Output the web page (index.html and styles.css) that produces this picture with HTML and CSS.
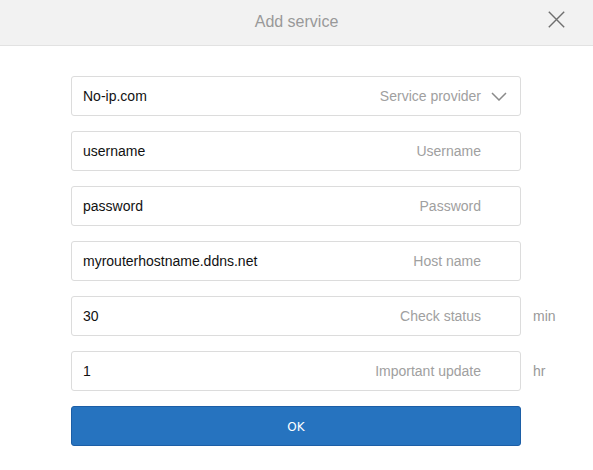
FILE: index.html
```html
<!DOCTYPE html>
<html>
<head>
<meta charset="utf-8">
<link rel="stylesheet" href="styles.css">
</head>
<body>
<div class="dialog">
  <header class="header">
    <div class="title">Add service</div>
    <button class="close" aria-label="Close">
      <svg width="17" height="17" viewBox="0 0 17 17"><path d="M0.8 0.8L16.2 16.2M16.2 0.8L0.8 16.2" stroke="#6f6f6f" stroke-width="1.4" fill="none"/></svg>
    </button>
  </header>
  <form class="form">
    <div class="row">
      <div class="field">
        <span class="value">No-ip.com</span>
        <span class="label">Service provider</span>
        <svg class="chev" width="16" height="9" viewBox="0 0 16 9"><path d="M1 1L8 8L15 1" stroke="#8a8a8a" stroke-width="1.5" fill="none"/></svg>
      </div>
    </div>
    <div class="row">
      <div class="field"><span class="value">username</span><span class="label pad">Username</span></div>
    </div>
    <div class="row">
      <div class="field"><span class="value">password</span><span class="label pad">Password</span></div>
    </div>
    <div class="row">
      <div class="field"><span class="value">myrouterhostname.ddns.net</span><span class="label pad">Host name</span></div>
    </div>
    <div class="row">
      <div class="field"><span class="value">30</span><span class="label pad">Check status</span></div>
      <span class="unit">min</span>
    </div>
    <div class="row">
      <div class="field"><span class="value">1</span><span class="label pad">Important update</span></div>
      <span class="unit">hr</span>
    </div>
    <div class="row">
      <button type="button" class="ok">OK</button>
    </div>
  </form>
</div>
</body>
</html>
```
FILE: styles.css
```css
* { box-sizing: border-box; }
html, body { margin: 0; padding: 0; background: #fff; }
body { font-family: "Liberation Sans", Arial, sans-serif; }
.dialog { width: 593px; height: 470px; background: #fff; }
.header {
  height: 46px;
  background: #f2f2f2;
  border-bottom: 1px solid #e2e2e2;
  display: flex;
  align-items: center;
  justify-content: center;
  position: relative;
}
.title { font-size: 16px; color: #999; margin-top: -2px; }
.close {
  position: absolute;
  right: 28px;
  top: 11px;
  background: none;
  border: 0;
  padding: 0;
  width: 17px;
  height: 17px;
  display: flex;
}
.form {
  padding: 30px 0 0 71px;
  display: flex;
  flex-direction: column;
  gap: 15px;
}
.row { display: flex; align-items: center; gap: 12px; }
.field {
  width: 450px;
  height: 40px;
  border: 1px solid #dcdcdc;
  border-radius: 3px;
  display: flex;
  align-items: center;
  padding: 0 13px 0 11px;
  font-size: 14px;
  padding-bottom: 1px;
}
.value { color: #111; flex: 1; }
.label { color: #a0a0a0; }
.label.pad { margin-right: 26px; }
.chev { margin-left: 10px; margin-top: 2px; }
.unit { color: #999; font-size: 14px; margin-bottom: 1px; }
.ok {
  width: 450px;
  height: 40px;
  background: #2673bf;
  border: 1px solid #1c5ea6;
  border-radius: 3px;
  color: #fff;
  font-family: "DejaVu Sans", sans-serif;
  font-size: 12px;
  padding: 2px 0 0;
}
```
